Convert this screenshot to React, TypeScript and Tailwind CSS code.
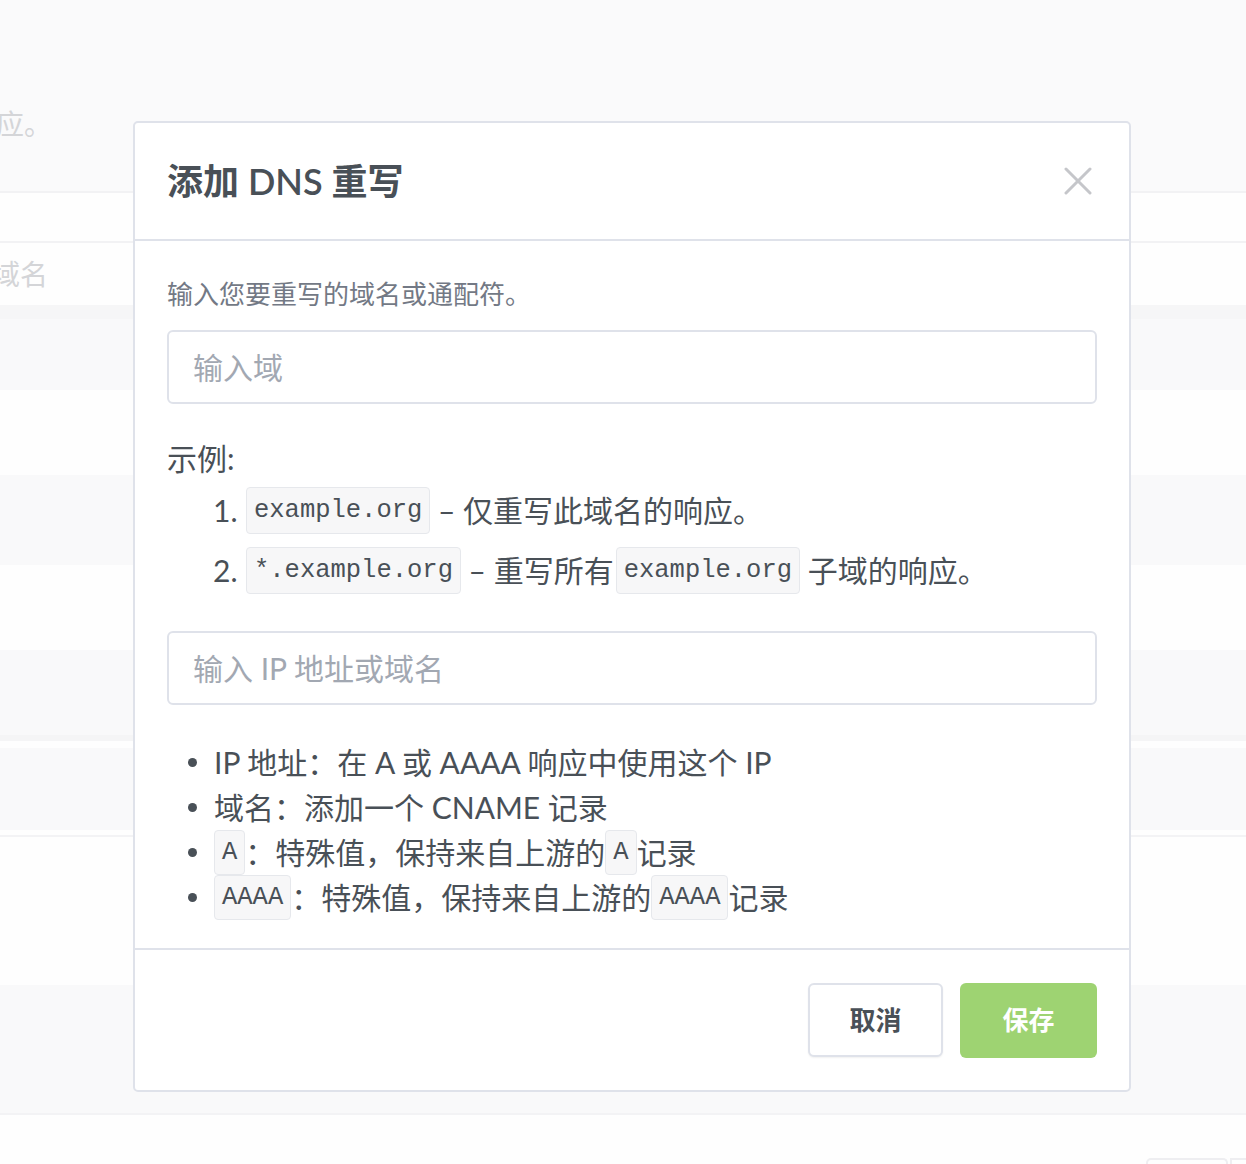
import React from 'react';

const sans = "font-[family-name:Lato,'Noto_Sans_CJK_SC',sans-serif]";
const mono = "font-[family-name:'Liberation_Mono',monospace]";

const Code: React.FC<{ children: React.ReactNode; tight?: boolean }> = ({ children, tight }) => (
  <code
    className={`${mono} inline-block rounded-[4px] border border-[#e6e8ec] bg-[#f7f7f8] px-[7px] text-[25.5px] leading-[29px] text-[#495057] ${
      tight ? 'py-[7px]' : 'py-[8px]'
    }`}
  >
    {children}
  </code>
);

const Background: React.FC = () => (
  <div className={`${sans} flex flex-col text-[28px] text-[#d4d5d8]`}>
    <div className="flex h-[191px] items-end bg-[#fafafb] pb-[46px]">
      <span className="-ml-[4px]">应。</span>
    </div>
    <div className="h-[2px] bg-[#f2f2f4]" />
    <div className="h-[48px] bg-[#fefefe]" />
    <div className="h-[2px] bg-[#f2f2f4]" />
    <div className="flex h-[62px] items-center bg-[#fefefe]">
      <span className="-ml-[8px]">域名</span>
    </div>
    <div className="h-[85px] border-t-[14px] border-[#f6f6f7] bg-[#f9f9fa]" />
    <div className="h-[85px] bg-[#fefefe]" />
    <div className="h-[90px] bg-[#f9f9fa]" />
    <div className="h-[85px] bg-[#fefefe]" />
    <div className="h-[91px] border-b-[6px] border-[#f5f5f6] bg-[#f9f9fa]" />
    <div className="h-[7px] bg-[#fefefe]" />
    <div className="h-[82px] bg-[#f9f9fa]" />
    <div className="h-[5px] bg-[#fefefe]" />
    <div className="h-[2px] bg-[#f3f3f5]" />
    <div className="h-[148px] bg-[#fefefe]" />
    <div className="h-[130px] border-b-2 border-[#f3f3f5] bg-[#f9f9fa]" />
    <div className="flex h-[60px] items-end justify-end gap-[2px] bg-[#fefefe]">
      <div className="h-[17px] w-[82px] rounded-t-[5px] border-x-2 border-t-2 border-[#eeeef1]" />
      <div className="h-[17px] w-[16px] border-l-2 border-t-2 border-[#eeeef1]" />
    </div>
  </div>
);

export default function App() {
  return (
    <div className={`${sans} relative h-[1164px] w-full overflow-hidden bg-[#fefefe] text-[#495057]`}>
      <Background />

      <div className="absolute left-[133px] top-[121px] w-[998px] rounded-[5px] border-2 border-[#dfe2ea] bg-white">
        <div className="flex h-[118px] items-center justify-between border-b-2 border-[#dfe2ea] px-[32px]">
          <h2 className="text-[36px] font-semibold leading-none text-[#495057]">添加 DNS 重写</h2>
          <button className="mr-[3px] p-[2px]" aria-label="close">
            <svg width="28" height="28" viewBox="0 0 28 28" fill="none" stroke="#c5c6ca" strokeWidth="3" strokeLinecap="round">
              <line x1="2" y1="2" x2="26" y2="26" />
              <line x1="26" y1="2" x2="2" y2="26" />
            </svg>
          </button>
        </div>

        <div className="px-[32px] pb-[28px] pt-[33px]">
          <p className="text-[26px] leading-[40px] text-[#737985]">输入您要重写的域名或通配符。</p>
          <input
            className="mt-[16px] block h-[74px] w-full rounded-[6px] border-2 border-[#dfe2ea] px-[24px] text-[30px] outline-none placeholder:text-[#a2a8b2]"
            placeholder="输入域"
          />

          <div className="mt-[34px] text-[30px] leading-[40px]">示例:</div>
          <ol className="mt-[9px] flex flex-col gap-[13px] pl-[46px] text-[30px]">
            <li className="flex h-[47px] items-center whitespace-pre">
              <span className="w-[33px]">1.</span>
              <Code>example.org</Code>
              <span> – 仅重写此域名的响应。</span>
            </li>
            <li className="flex h-[47px] items-center whitespace-pre">
              <span className="w-[33px]">2.</span>
              <Code>*.example.org</Code>
              <span className="mr-[2px]"> – 重写所有</span>
              <Code>example.org</Code>
              <span> 子域的响应。</span>
            </li>
          </ol>

          <input
            className="mt-[37px] block h-[74px] w-full rounded-[6px] border-2 border-[#dfe2ea] px-[24px] text-[30px] outline-none placeholder:text-[#a2a8b2]"
            placeholder="输入 IP 地址或域名"
          />

          <ul className="mt-[35px] flex flex-col text-[30px]">
            {[
              <span key="a">IP 地址：在 A 或 AAAA 响应中使用这个 IP</span>,
              <span key="b">域名：添加一个 CNAME 记录</span>,
              <span key="c" className="flex items-center">
                <Code tight>A</Code>
                <span>：特殊值，保持来自上游的</span>
                <Code tight>A</Code>
                <span>记录</span>
              </span>,
              <span key="d" className="flex items-center">
                <Code tight>AAAA</Code>
                <span>：特殊值，保持来自上游的</span>
                <Code tight>AAAA</Code>
                <span>记录</span>
              </span>,
            ].map((item, i) => (
              <li key={i} className="flex h-[45px] items-center">
                <span className="flex w-[47px] items-center">
                  <span className="ml-[21px] h-[9px] w-[9px] rounded-full bg-[#495057]" />
                </span>
                {item}
              </li>
            ))}
          </ul>
        </div>

        <div className="flex justify-end gap-[17px] border-t-2 border-[#dfe2ea] px-[32px] pb-[32px] pt-[33px]">
          <button className="h-[74px] w-[135px] rounded-[6px] border-2 border-[#dfe2ea] bg-white text-[26px] font-bold text-[#495057] shadow-[0_1px_2px_rgba(0,0,0,0.06)]">
            取消
          </button>
          <button className="h-[75px] w-[137px] rounded-[6px] bg-[#9ed372] text-[26px] font-bold text-white">
            保存
          </button>
        </div>
      </div>
    </div>
  );
}
